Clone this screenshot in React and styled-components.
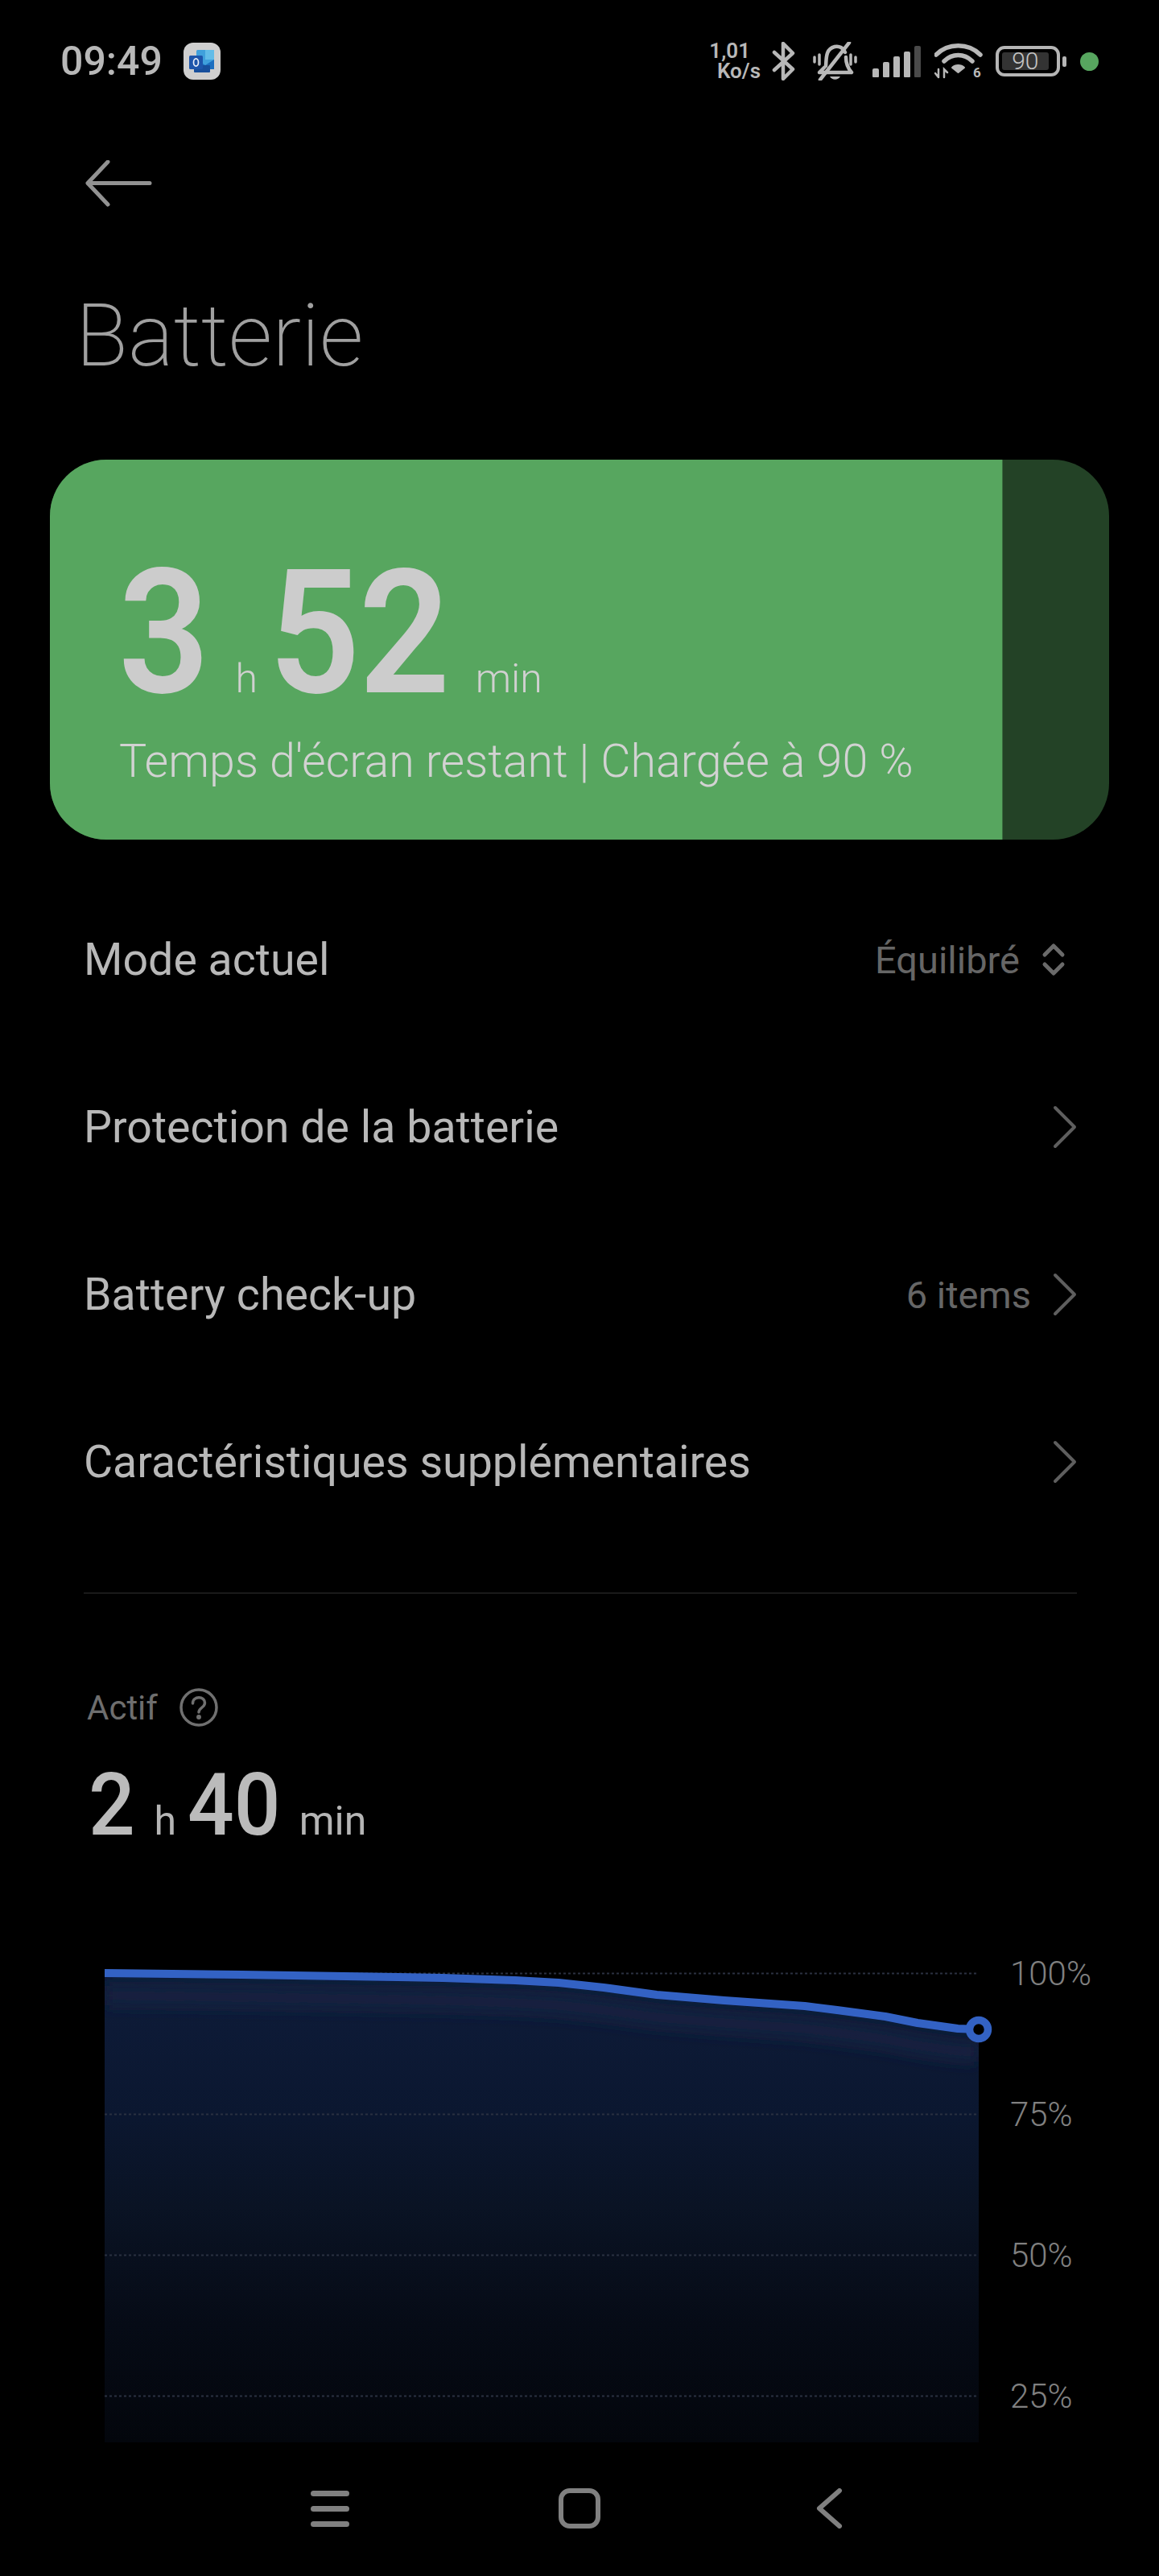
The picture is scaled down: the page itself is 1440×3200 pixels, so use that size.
import React from "react";
import styled, { createGlobalStyle } from "styled-components";

const rows = [
  { label: "Mode actuel", value: "Équilibré", icon: "updown" },
  { label: "Protection de la batterie", icon: "right" },
  { label: "Battery check-up", value: "6 items", icon: "right" },
  { label: "Caractéristiques supplémentaires", icon: "right" },
];

const curve =
  "130,2452 300,2454 550,2458 640,2461 694,2464 750,2470 816,2479 900,2486 1000,2493 1040,2498 1100,2506 1140,2514 1190,2521 1216,2522";

const App = () => {
  return (
    <Page>
      <GlobalStyle />
      <StatusBar>
        <StatusLeft>
          <Clock>09:49</Clock>
          <NotifIcon>
            <svg width="32" height="30" viewBox="0 0 32 30">
              <rect x="9" y="1" width="22" height="24" rx="1.5" fill="#3fa0dc" />
              <rect x="20" y="1" width="11" height="12" fill="#62bce8" />
              <path d="M9 13 L20 20 L31 13 V25 H9Z" fill="#1b6fc0" />
              <rect x="6" y="20" width="20" height="9" rx="1" fill="#174f9c" />
              <rect x="0" y="8" width="17" height="17" rx="1.5" fill="#1d55ab" />
              <ellipse cx="8.5" cy="16.5" rx="3" ry="4.6" fill="none" stroke="#e8eef8" strokeWidth="1.7" />
            </svg>
          </NotifIcon>
        </StatusLeft>
        <StatusRight>
          <Speed>
            <SpeedTop>1,01</SpeedTop>
            <span>Ko/s</span>
          </Speed>
          <BluetoothIcon width="30" height="48" viewBox="0 0 30 48" fill="none" stroke="#b8b8b8" strokeWidth="4.5" strokeLinejoin="round" strokeLinecap="round">
            <path d="M3 13 L26 34 L14 46 V2 L26 14 L3 35" />
          </BluetoothIcon>
          <svg width="55" height="48" viewBox="0 0 55 48" fill="none" stroke="#b8b8b8" strokeWidth="4.5" strokeLinecap="round" strokeLinejoin="round">
            <path d="M16 30 C17 22 15 9 27 6 C33 4.500 38 8 40 13 M41 19 C41 26 43 32 48 38 H8 C10 36 12 34 14 32" />
            <path d="M45 1 L9 47" />
            <path d="M21 43 C24 48 31 48 34 43" fill="#b8b8b8" stroke="none" />
            <path d="M8 16 V28 M2 19 V25 M47 16 V28 M53 19 V25" strokeWidth="3.5" />
          </svg>
          <SignalBars>
            <Bar $h={11} />
            <Bar $h={19} />
            <Bar $h={26} />
            <Bar $h={32} />
            <Bar $h={39} $dim />
          </SignalBars>
          <WifiIcon width="62" height="50" viewBox="0 -3 62 50" fill="none" stroke="#b8b8b8" strokeLinecap="round">
            <path d="M2 14 C17 -1 42 -1 57 14" strokeWidth="5.500" />
            <path d="M12 22 C22 12 37 12 47 22" strokeWidth="5.500" />
            <path d="M22 30 C26 26 33 26 37 30 L29.500 36Z" fill="#b8b8b8" stroke="#b8b8b8" strokeWidth="2" strokeLinejoin="round" />
            <path d="M5 32 V42 M1 37 L5 42 M12 42 V32 L16 36" strokeWidth="2.500" />
            <text x="48" y="42" fill="#b8b8b8" stroke="none" fontFamily="Roboto, sans-serif" fontSize="17" fontWeight="700">6</text>
          </WifiIcon>
          <BatteryWrap>
            <BatteryBody>
              <BatteryLevel>90</BatteryLevel>
            </BatteryBody>
            <BatteryNub />
          </BatteryWrap>
          <GreenDot />
        </StatusRight>
      </StatusBar>

      <BackArrow width="84" height="58" viewBox="0 0 84 58" fill="none" stroke="#929292" strokeWidth="5" strokeLinecap="round" strokeLinejoin="round">
        <path d="M29 2 L4 28.500 L29 55 M4 28.500 H81" />
      </BackArrow>
      <Title>Batterie</Title>

      <Card>
        <CardFill style={{ width: "90%" }}>
          <BigTime>
            <BigNum $n={1}>3</BigNum>
            <BigUnit>h</BigUnit>
            <BigNum $n={2}>52</BigNum>
            <BigUnit>min</BigUnit>
          </BigTime>
          <CardSub>Temps d'écran restant | Chargée à 90 %</CardSub>
        </CardFill>
      </Card>

      <List>
        {rows.map((r) => (
          <Row key={r.label}>
            <RowLabel>{r.label}</RowLabel>
            <RowRight>
              {r.value && <RowValue>{r.value}</RowValue>}
              {r.icon === "right" ? (
                <svg width="30" height="54" viewBox="0 0 30 54" fill="none" stroke="#5e5e5e" strokeWidth="4" strokeLinecap="round" strokeLinejoin="round">
                  <path d="M3 3 L27 27 L3 51" />
                </svg>
              ) : (
                <UpDown width="30" height="42" viewBox="0 0 30 42" fill="none" stroke="#6a6a6a" strokeWidth="5" strokeLinecap="round" strokeLinejoin="round">
                  <path d="M4 15 L15 4 L26 15 M4 27 L15 38 L26 27" />
                </UpDown>
              )}
            </RowRight>
          </Row>
        ))}
      </List>

      <Divider />

      <ActiveHead>
        <ActiveLabel>Actif</ActiveLabel>
        <svg width="48" height="48" viewBox="0 0 48 48" fill="none" stroke="#707070" strokeWidth="3.500" strokeLinecap="round">
          <circle cx="24" cy="24" r="22" />
          <path d="M16.500 19 C16.500 9.500 31.500 9.500 31.500 18.500 C31.500 24 24 24.500 24 30" />
          <circle cx="24" cy="36" r="1.200" fill="#707070" />
        </svg>
      </ActiveHead>
      <SmallTime>
        <SmallNum $n={1}>2</SmallNum>
        <SmallUnit>h</SmallUnit>
        <SmallNum $n={2}>40</SmallNum>
        <SmallUnit>min</SmallUnit>
      </SmallTime>

      <ChartRow>
        <ChartSvg width="1105" height="595" viewBox="130 2440 1105 595">
          <defs>
            <linearGradient id="areaFill" x1="0" y1="2452" x2="0" y2="3035" gradientUnits="userSpaceOnUse">
              <stop offset="0" stopColor="#0e1d3a" />
              <stop offset="0.12" stopColor="#0d1a36" />
              <stop offset="0.3" stopColor="#0b1730" />
              <stop offset="0.5" stopColor="#0a1324" />
              <stop offset="0.75" stopColor="#060b16" />
              <stop offset="1" stopColor="#03060c" />
            </linearGradient>
            <clipPath id="areaClip">
              <polygon points={`${curve} 1216,3035 130,3035`} />
            </clipPath>
            <filter id="soft" x="-5%" y="-50%" width="110%" height="200%">
              <feGaussianBlur stdDeviation="9" />
            </filter>
          </defs>
          <polygon points={`${curve} 1216,3035 130,3035`} fill="url(#areaFill)" />
          <g clipPath="url(#areaClip)">
            <polyline transform="translate(0 28)" points={curve} fill="none" stroke="#14243f" strokeWidth="24" filter="url(#soft)" />
          </g>
          {[2452.5, 2627.5, 2802.5, 2977.5].map((y) => (
            <line key={y} x1="130" x2="1213" y1={y} y2={y} stroke="#2a3141" strokeWidth="2" strokeDasharray="3 3" />
          ))}
          <polyline points={curve} fill="none" stroke="#3362c4" strokeWidth="10" strokeLinejoin="round" />
          <circle cx="1216" cy="2522" r="11.500" fill="#000" stroke="#3362c4" strokeWidth="9.500" />
        </ChartSvg>
        <Ticks>
          {["100%", "75%", "50%", "25%"].map((t) => (
            <Tick key={t}>{t}</Tick>
          ))}
        </Ticks>
      </ChartRow>

      <NavBar>
        <NavSlot>
          <svg width="48" height="50" viewBox="0 0 48 50" fill="#808080">
            <rect y="3" width="48" height="7" rx="3.500" />
            <rect y="22" width="48" height="7" rx="3.500" />
            <rect y="41" width="48" height="7" rx="3.500" />
          </svg>
        </NavSlot>
        <NavSlot>
          <svg width="52" height="50" viewBox="0 0 52 50" fill="none" stroke="#808080" strokeWidth="6">
            <rect x="3" y="3" width="46" height="44" rx="11" />
          </svg>
        </NavSlot>
        <NavSlot>
          <svg width="34" height="50" viewBox="0 0 34 50" fill="none" stroke="#808080" strokeWidth="6" strokeLinecap="round" strokeLinejoin="round">
            <path d="M30 3 L5 25 L30 47" />
          </svg>
        </NavSlot>
      </NavBar>
    </Page>
  );
};
export default App;

const GlobalStyle = createGlobalStyle`
  html, body {
    margin: 0;
    padding: 0;
    background: #000;
  }
`;

const Page = styled.div`
  width: 1440px;
  height: 3200px;
  overflow: hidden;
  background: #000;
  font-family: Roboto, "Noto Sans", sans-serif;
  color: #bdbdbd;
  display: flex;
  flex-direction: column;
`;

const StatusBar = styled.div`
  height: 152px;
  display: flex;
  justify-content: space-between;
  align-items: center;
  padding: 0 75px;
`;
const StatusLeft = styled.div`
  display: flex;
  align-items: center;
  gap: 26px;
`;
const Clock = styled.div`
  font-size: 50px;
  font-weight: 500;
  color: #b8b8b8;
`;
const NotifIcon = styled.div`
  width: 46px;
  height: 46px;
  border-radius: 12px;
  background: #cfcfcf;
  display: flex;
  align-items: center;
  justify-content: center;
`;
const StatusRight = styled.div`
  display: flex;
  align-items: center;
  gap: 17px;
`;
const Speed = styled.div`
  display: flex;
  flex-direction: column;
  align-items: flex-end;
  font-size: 26px;
  line-height: 25px;
  font-weight: 600;
  color: #b8b8b8;
`;
const SpeedTop = styled.span`
  padding-right: 13px;
`;
const BluetoothIcon = styled.svg`
  margin: 0 4px 0 -3px;
`;
const SignalBars = styled.div`
  display: flex;
  align-items: flex-end;
  gap: 5px;
  height: 39px;
  margin-left: 2px;
`;
const Bar = styled.div`
  width: 8px;
  height: ${(p) => p.$h}px;
  border-radius: 2px 2px 1px 1px;
  background: ${(p) => (p.$dim ? "#4a4a4a" : "#b8b8b8")};
`;
const WifiIcon = styled.svg`
  margin-right: -3px;
`;
const BatteryWrap = styled.div`
  display: flex;
  align-items: center;
  gap: 3px;
`;
const BatteryBody = styled.div`
  box-sizing: border-box;
  width: 80px;
  height: 38px;
  border: 4px solid #b5b5b5;
  border-radius: 11px;
  padding: 4px;
`;
const BatteryLevel = styled.div`
  width: 90%;
  height: 100%;
  background: #333;
  border-radius: 3px;
  color: #c4c4c4;
  font-size: 30px;
  font-weight: 300;
  line-height: 22px;
  text-align: center;
`;
const BatteryNub = styled.div`
  width: 5px;
  height: 13px;
  border-radius: 2px;
  background: #b5b5b5;
`;
const GreenDot = styled.div`
  width: 23px;
  height: 23px;
  border-radius: 50%;
  background: #57a65f;
`;

const BackArrow = styled.svg`
  display: block;
  margin: 47px 0 0 105px;
`;
const Title = styled.h1`
  margin: 101px 0 0 94px;
  font-size: 107px;
  line-height: 120px;
  font-weight: 200;
  color: #a0a0a0;
`;

const Card = styled.div`
  box-sizing: border-box;
  width: 1316px;
  height: 472px;
  margin: 93px 0 0 62px;
  border-radius: 70px;
  overflow: hidden;
  background: #234226;
`;
const CardFill = styled.div`
  box-sizing: border-box;
  height: 100%;
  padding: 108px 0 0 86px;
  background: #57a65f;
  border-right: 1px solid #3a6d3f;
`;
const BigTime = styled.div`
  display: flex;
  align-items: baseline;
  height: 216px;
  line-height: 216px;
  margin-left: -1px;
`;
/* the digits in the picture are a little narrower than Roboto's */
const BigNum = styled.span`
  display: inline-block;
  font-size: 216px;
  font-weight: 600;
  letter-spacing: -2px;
  color: #cccccc;
  transform: scaleX(0.92);
  transform-origin: left;
  margin-right: ${(p) => p.$n * -10}px;
`;
const BigUnit = styled.span`
  font-size: 50px;
  font-weight: 300;
  color: #d0d0d0;
  margin: 0 14px 0 34px;
`;
const CardSub = styled.div`
  margin-top: 16px;
  font-size: 57.4px;
  line-height: 70px;
  font-weight: 300;
  color: #d2d2d2;
`;

const List = styled.div`
  margin: 45px 0 0 104px;
  width: 1234px;
`;
const Row = styled.div`
  height: 208px;
  display: flex;
  align-items: center;
  justify-content: space-between;
`;
const RowLabel = styled.div`
  font-size: 55.5px;
  font-weight: 400;
  color: #b8b8b8;
`;
const RowRight = styled.div`
  display: flex;
  align-items: center;
  gap: 27px;
`;
const RowValue = styled.div`
  font-size: 47px;
  color: #666666;
`;
const UpDown = styled.svg`
  margin-right: 14px;
`;

const Divider = styled.div`
  margin: 58px 0 0 104px;
  width: 1234px;
  height: 2px;
  background: #1a1a1a;
`;

const ActiveHead = styled.div`
  margin: 116px 0 0 108px;
  height: 50px;
  display: flex;
  align-items: center;
  gap: 27px;
`;
const ActiveLabel = styled.div`
  font-size: 42px;
  color: #6e6e6e;
`;
const SmallTime = styled.div`
  margin: 42px 0 0 110px;
  display: flex;
  align-items: baseline;
  height: 108px;
  line-height: 108px;
`;
const SmallNum = styled.span`
  display: inline-block;
  font-size: 108px;
  font-weight: 500;
  color: #bbbbbb;
  transform: scaleX(0.94);
  transform-origin: left;
  margin-right: ${(p) => p.$n * -4}px;
`;
const SmallUnit = styled.span`
  font-size: 50px;
  color: #b5b5b5;
  margin: 0 14px 0 24px;
`;

const ChartRow = styled.div`
  margin: 68px 0 0 130px;
  height: 670px;
  display: flex;
  align-items: flex-start;
  gap: 20px;
`;
const ChartSvg = styled.svg`
  display: block;
  margin-top: 75px;
`;
const Ticks = styled.div`
  display: flex;
  flex-direction: column;
`;
const Tick = styled.div`
  height: 175px;
  display: flex;
  align-items: center;
  font-size: 42px;
  font-weight: 300;
  color: #808080;
`;

const NavBar = styled.div`
  flex: 1;
  padding: 57px 0 0 255px;
  display: flex;
  align-items: flex-start;
  background: #000;
  position: relative;
`;
const NavSlot = styled.div`
  width: 310px;
  display: flex;
  justify-content: center;
`;
